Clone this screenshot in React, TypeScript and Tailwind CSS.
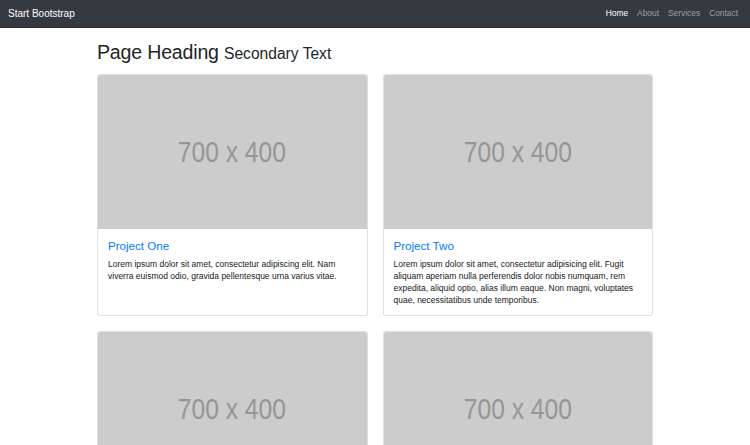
const projects = [
  {
    title: "Project One",
    text: "Lorem ipsum dolor sit amet, consectetur adipiscing elit. Nam viverra euismod odio, gravida pellentesque urna varius vitae.",
  },
  {
    title: "Project Two",
    text: "Lorem ipsum dolor sit amet, consectetur adipisicing elit. Fugit aliquam aperiam nulla perferendis dolor nobis numquam, rem expedita, aliquid optio, alias illum eaque. Non magni, voluptates quae, necessitatibus unde temporibus.",
  },
  {
    title: "Project Three",
    text: "Lorem ipsum dolor sit amet, consectetur adipiscing elit. Nam viverra euismod odio, gravida pellentesque urna varius vitae.",
  },
  {
    title: "Project Four",
    text: "Lorem ipsum dolor sit amet, consectetur adipiscing elit. Nam viverra euismod odio, gravida pellentesque urna varius vitae.",
  },
]

function Placeholder() {
  return (
    <div className="h-[154px] bg-[#cccccc] flex items-center justify-center rounded-t-[3px]">
      <span className="text-[30px] text-[#969696] leading-none scale-x-[0.82] inline-block whitespace-nowrap">
        700 x 400
      </span>
    </div>
  )
}

export default function App() {
  return (
    <div className="min-h-screen bg-white font-['Liberation_Sans',Arial,sans-serif] text-[#212529]">
      <nav className="h-[28px] bg-[#343a40] flex items-center justify-between pl-[8px] pr-[12px] border-b border-[#2a2e33]">
        <a className="text-white text-[10px]">Start Bootstrap</a>
        <ul className="flex gap-[9px] text-[8.4px]">
          <li className="text-white font-medium">Home</li>
          <li className="text-white/50">About</li>
          <li className="text-white/50">Services</li>
          <li className="text-white/50">Contact</li>
        </ul>
      </nav>

      <main className="w-[556px] mx-auto">
        <h1 className="mt-[13px] mb-[9px] text-[19.6px] leading-[1.2] tracking-[-0.2px]">
          Page Heading <small className="text-[15.6px] tracking-normal">Secondary Text</small>
        </h1>

        <div className="grid grid-cols-2 gap-x-[15px] gap-y-[15px]">
          {projects.map((p) => (
            <div key={p.title} className="flex flex-col border border-black/[0.12] rounded-[3px] bg-white">
              <Placeholder />
              <div className="flex-1 px-[10px] pt-[10px] pb-[9px]">
                <h4 className="text-[11.6px] leading-[1.2] text-[#007bff] mb-[6px]">{p.title}</h4>
                <p className="text-[8.5px] leading-[12px] font-medium text-[#16191c]">{p.text}</p>
              </div>
            </div>
          ))}
        </div>
      </main>
    </div>
  )
}
